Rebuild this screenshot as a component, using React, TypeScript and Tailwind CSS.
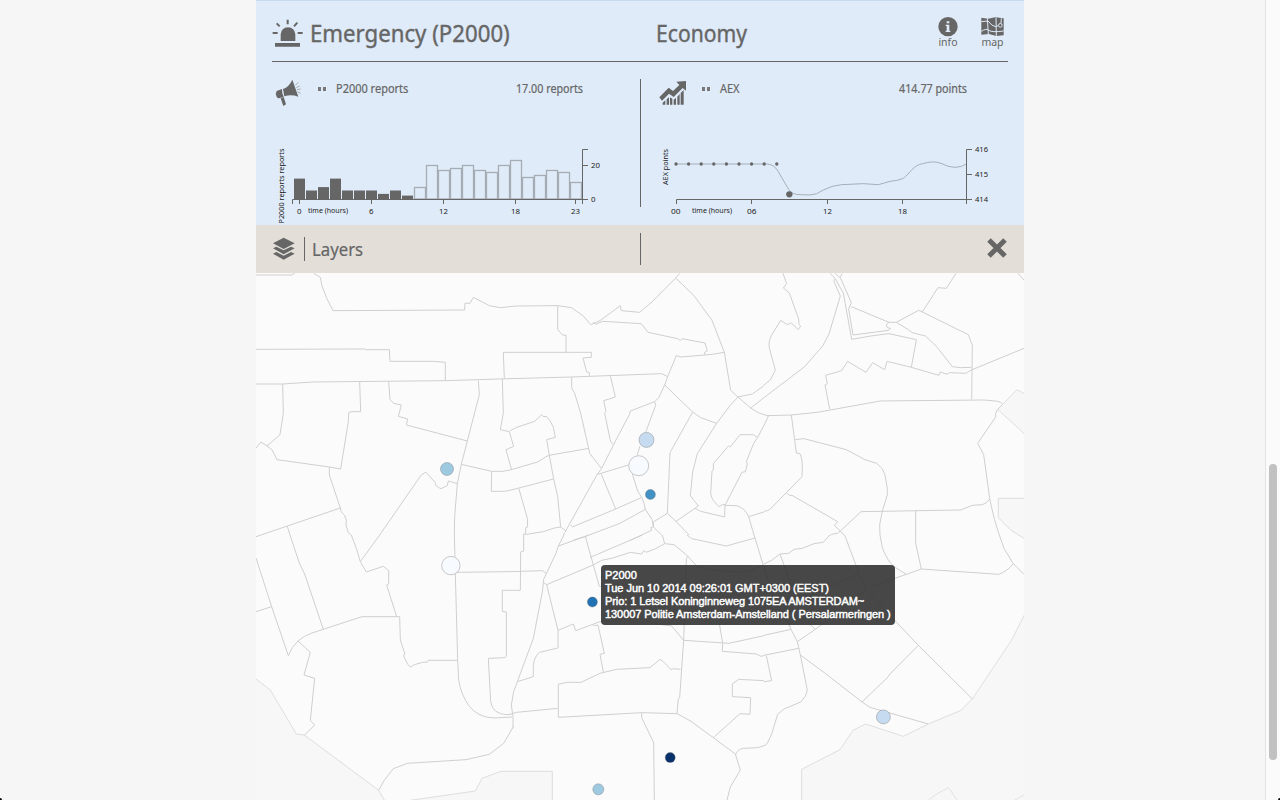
import React from 'react';

const INK = '#666';

function SirenIcon() {
  return (
    <svg className="h-7 w-[31px]" viewBox="48 57 93 84" fill={INK} stroke={INK}>
      <path stroke="none" d="M74 123V103Q76 83 96 82Q116 83 118 103V123Z M57 129H132V140H57Z" />
      <path strokeWidth="6" fill="none" d="M95 59V73 M62 70L71 79 M124 68L114 79 M50 99H65 M125 99H140" />
    </svg>
  );
}

function BullhornIcon() {
  return (
    <svg className="h-7 w-[27px]" viewBox="57 238 81 84" fill={INK}>
      <path d="M81 268Q99 262 109 240L127 291Q105 283 85 290Z M78 268L62 274Q57 282 62 291Q65 297 72 295L83 291Q77 280 78 268Z M74 296L83 292L90 314L82 319Z" />
      <path fill="none" stroke="#888" strokeWidth="2" d="M118 257L127 248 M121 264L131 259 M123 270L134 268 M124 276L134 281" />
    </svg>
  );
}

function GrowthIcon() {
  return (
    <svg className="mt-[2px] h-6 w-[27px]" viewBox="55 243 81 72" fill={INK}>
      <path d="M56 292L84 263L97 273L116 255L107 245L136 243V272L126 264L99 291L85 281L64 302Z" />
      <path d="M66 314V308L74 301V314Z M78 314V298L85 292V314Z M88 314V292L95 296V314Z M99 314V299L106 294V314Z M110 314V290L117 282V314Z M120 314V279L129 270V314Z" />
    </svg>
  );
}

function InfoIcon() {
  return (
    <svg className="size-5" viewBox="894 50 60 60">
      <circle cx="924" cy="79" r="29" fill={INK} />
      <path fill="#dfebf8" d="M920 63H928V69H920Z M917 73H928V91H931V95H917V91H920V77H917Z" />
    </svg>
  );
}

function MapIcon() {
  return (
    <svg className="h-[19px] w-[23px]" viewBox="1022 52 69 57">
      <path fill={INK} d="M1023 54L1043 57L1065 53L1090 56V107L1068 109L1046 103L1023 105Z" />
      <path fill="none" stroke="#dfebf8" strokeWidth="3" d="M1041 56L1044 104 M1067 54L1068 109 M1023 66L1043 64Q1055 80 1066 81L1074 78 M1023 95Q1038 85 1046 92T1090 94 M1083 56L1082 72" />
      <circle cx="1080" cy="77" r="5.5" fill={INK} stroke="#dfebf8" strokeWidth="3" />
    </svg>
  );
}

function LayersIcon() {
  return (
    <svg className="h-6 w-[22px]" viewBox="51 307 66 72" fill={INK}>
      <path d="M83 309L116 326L83 343L51 326Z M51 341L61 336L83 347L105 336L116 341L83 359Z M51 357L61 352L83 363L105 352L116 357L83 375Z" />
    </svg>
  );
}

const BARS = [12, 5, 7, 12, 5, 5, 5, 3, 5, 2, 7, 20, 17, 18, 20, 17, 16, 20, 23, 13, 14, 17, 16, 10];

function ChartText({ x, y, w, children, rotate = false }: { x: number; y: number; w: number; children: string; rotate?: boolean }) {
  return (
    <text
      x={x}
      y={y}
      textLength={w}
      lengthAdjust="spacingAndGlyphs"
      transform={rotate ? `rotate(-90 ${x} ${y})` : undefined}
      className="fill-[#222] font-['Noto_Sans',sans-serif] text-[7.5px]"
    >
      {children}
    </text>
  );
}

function ReportsChart() {
  return (
    <svg className="block h-[85px] w-[384px]" viewBox="256 140 384 85">
      {BARS.map((v, i) => {
        const x = 294 + i * 12;
        const h = v * 1.7;
        return i < 10 ? (
          <rect key={i} x={x} y={199 - h} width="11" height={h} fill={INK} />
        ) : (
          <rect key={i} x={x + 0.5} y={Math.round(199 - h) + 0.5} width="11" height={Math.round(h) - 0.5} fill="none" stroke="#a6acb3" strokeWidth="1.3" />
        );
      })}
      <path fill="none" stroke={INK} d="M292.5 204V199.5H582.5V204 M299.5 199V204 M371.5 199V204 M443.5 199V204 M515.5 199V204 M575.5 199V204 M588 149.5H582.5V204 M582 165.5H588 M582 199.5H588" />
      <ChartText x={297} y={214} w={4.5}>0</ChartText>
      <ChartText x={308} y={213} w={40}>time (hours)</ChartText>
      <ChartText x={369} y={214} w={4.5}>6</ChartText>
      <ChartText x={439} y={214} w={9}>12</ChartText>
      <ChartText x={511} y={214} w={9}>18</ChartText>
      <ChartText x={571} y={214} w={9}>23</ChartText>
      <ChartText x={591} y={168} w={9}>20</ChartText>
      <ChartText x={591} y={202} w={4.5}>0</ChartText>
      <ChartText x={284} y={223.5} w={75} rotate>P2000 reports reports</ChartText>
    </svg>
  );
}

function AexChart() {
  return (
    <svg className="block h-[85px] w-[384px]" viewBox="640 140 384 85">
      <g transform="translate(640 135) scale(0.33333)">
        <path fill="none" stroke="#a3b0bb" strokeWidth="3" d="M108 87H380Q402 87 415 110Q432 140 446 163Q456 179 480 179L510 180Q530 180 550 165Q580 150 605 149L670 146L715 149Q730 145 750 139Q775 137 790 130C810 115 820 90 848 86Q880 76 903 85Q925 97 945 97Q965 97 979 87" />
        {[0, 1, 2, 3, 4, 5, 6, 7, 8].map((i) => (
          <circle key={i} cx={108 + i * 37.8} cy="87" r="5" fill={INK} />
        ))}
        <circle cx="448" cy="178" r="9.5" fill={INK} />
      </g>
      <path fill="none" stroke={INK} d="M676.5 204V199.5H966.5 M751.5 199V204 M827.5 199V204 M902.5 199V204 M972 149.5H966.5V204 M966 174.5H972 M966 199.5H972" />
      <ChartText x={671} y={214} w={9.5}>00</ChartText>
      <ChartText x={692} y={213} w={40}>time (hours)</ChartText>
      <ChartText x={747} y={214} w={9.5}>06</ChartText>
      <ChartText x={823} y={214} w={9}>12</ChartText>
      <ChartText x={898} y={214} w={9}>18</ChartText>
      <ChartText x={975} y={152} w={13}>416</ChartText>
      <ChartText x={975} y={177} w={13}>415</ChartText>
      <ChartText x={975} y={202} w={13}>414</ChartText>
      <ChartText x={668} y={185} w={36} rotate>AEX points</ChartText>
    </svg>
  );
}

/* Each tile has its own origin; path units are thirds of a pixel. */
const TILES = [
  {
    at: 'translate(256 270) scale(0.33333)',
    outside: '',
    lines:
      'M0 15H107L116 10 M173 10L193 22L198 48Q210 85 231 122L626 120L627 100H642L652 82L700 107L733 113L762 110 M0 238L326 237L330 239H400L402 274H530L568 277V332 M0 342H80L170 336L568 332L762 326 M80 342L82 430L72 494L33 528L15 516L0 534 M33 528L48 539L63 569L220 591L254 597L277 455L278 428L285 425H314L311 334 M398 334L402 388L413 400L436 405L427 439L455 447L451 465L634 513 M667 332L670 374L634 513L616 583L604 641L596 740L595 795 M220 591V615L253 714L255 725L265 735L271 750L270 766L277 788L285 794 M0 800L253 714 M94 769L102 795 M371 795L495 616L509 606L538 638V645L547 652L555 656L574 647L577 633L604 641 M616 583L707 604H740L762 600 M707 604L706 664H745L762 661 M745 326L742 247H762 M739 326L742 430L733 479L760 485L773 529L750 539L755 558L767 600',
  },
  {
    at: 'translate(510 270) scale(0.33333)',
    outside: '',
    lines:
      'M0 110L20 108L143 107L185 113L220 138L242 164L270 152L331 107L334 122L389 127L426 96L497 24L509 10 M497 24L552 77L606 151L643 247L662 361L684 381L722 414L745 428L775 438 M143 107V178L157 195L168 196V247 M0 247H244V262L219 264L230 306L238 308V319 M0 326L185 321L455 311L473 320L499 257L514 261L607 253L643 247 M250 156L257 163L279 154L394 161L414 187L503 206L511 212L516 206L585 219L592 243L584 247V254 M473 320L464 345L447 382L434 395L361 423L358 434L318 510L275 595L260 616L182 756L166 785L160 795 M185 321V353L194 370L212 430L236 535L239 550L274 595 M301 317L316 381L281 392L288 424L284 430L302 516L309 522 M434 395L437 406L407 487 M390 528L382 555 M367 612L383 663L396 684L402 700L406 718L426 748L430 770L435 776L455 795 M464 345L548 426L572 443L620 460 M548 426L480 548L472 730L430 756 M684 381L660 407L620 460L562 551L548 606L541 677L565 708L555 715L498 754 M472 730L498 754L537 795 M555 715L572 724L644 741L645 706L680 707Q705 714 716 740L732 795 M716 740L762 726 M645 706L696 607L706 605L712 582L709 575L731 520L743 502Q732 491 715 494H690L661 531L656 527L610 581V600L606 603L602 672L608 689L626 710L637 704H645 M743 502L765 460L775 438 M684 381L727 372L762 347 M722 414L762 383 M0 482L20 472L74 454L95 434L100 440L109 439L120 452L130 472L136 502L110 509L118 556 M0 600L83 576L108 560L118 556L236 535 M118 556L131 627L143 680L152 771L168 783 M152 771L133 774L100 785L50 793L41 792V795 M0 661L131 627 M27 657L52 745L53 771L47 773V791 M260 614L355 585 M274 613L317 717 M182 765L187 771L317 717L396 682 M192 810L230 798L330 760L406 718 M364 810L426 780L422 773L430 770V756',
  },
  {
    at: 'translate(764 270) scale(0.33333)',
    outside: 'M716 403L759 359L785 373V495L701 418Z M785 685H703V743L740 780L785 808Z',
    lines:
      'M57 10L68 41L58 54L76 69L104 147L105 163L110 168L103 179L82 159L70 164L50 151L22 197L16 212L15 230L34 300L19 330L0 345 M0 383L122 290L176 228L195 192L229 78L209 33L214 27L238 69L263 208L320 198L375 191L457 209L442 292 M198 10L215 27 M214 10L228 23L235 10 M229 23L262 98L254 117L267 195L374 181L379 175L370 173Q363 162 375 157H397L464 121L475 126L522 53L547 55L576 10 M262 110L375 157 M397 157L430 177L445 188L484 198L517 229L565 290L590 293L622 292 M475 126L613 194L625 226L623 388 M780 235L622 300L605 310L556 308L549 313L529 306L525 316L442 292L369 274L362 299L326 278L306 307L251 274L233 302L185 316L190 341L183 345L197 417 M12 437L82 435L160 427L349 393L660 390L695 393Q714 395 716 403L701 418L695 430V441L641 520L659 554L677 685Q690 750 706 795 M82 435L97 549L108 551Q118 570 114 620L67 668L19 717Q12 723 0 724 M67 668L76 676H84L221 755L211 766L229 783L242 797 M229 783L291 725L590 720L625 706L655 704Q669 701 677 687 M229 783L220 790L203 793L197 797 M94 509L120 506L247 539L303 569L338 580Q359 595 363 615L370 656V675L355 723L347 765L348 795 M455 721V795 M762 10L780 30',
  },
  {
    at: 'translate(256 535) scale(0.33333)',
    outside: 'M-5 428L43 465L121 597L145 600L368 766L388 800H-5Z M435 800L658 768L678 730L735 709H889V800Z',
    lines:
      'M102 0L130 84L147 120L202 283 M0 69L47 215L97 362Q107 335 126 318Q145 302 165 295L318 245H431L433 315L447 358L442 361L455 388L464 396L475 389L500 382L515 381L517 376H605 M0 230L47 215 M286 0L301 40L313 80L371 0 M313 80L331 111L382 94L398 107V147L392 150L422 245 M595 0L597 66 M598 116L605 376L608 435Q615 480 640 514Q667 548 715 549L768 546 M601 112L762 110 M762 166H739V229L751 231V363L747 368L697 370L704 500Q709 537 752 539L764 538 M771 577L743 625L700 658L630 674L454 685L412 701L385 736L368 766 M126 318L163 352L144 420L176 430L163 556L176 570L145 601',
  },
  {
    at: 'translate(510 535) scale(0.33333)',
    outside: '',
    lines:
      'M41 0V48L32 51L31 166H0 M162 0L145 33L138 55L101 133L98 165L70 310L22 440L11 470L4 510L9 545V580 M145 33L226 4L235 0 M226 4L268 154H273 M240 67L262 58L397 0 M110 149L245 92L275 76L309 69L361 52L395 57L402 46L408 52L435 42L464 26L457 0 M464 26L492 29L530 60L550 82L562 95L610 105L702 113L762 90 M110 149L144 286L190 267L197 287L270 260L390 250L440 267L485 273L521 316 M144 286V339L88 352Q67 373 70 405V425L22 440 M0 110L98 107L108 115 M101 143L110 149 M247 269L253 272L264 270L283 355L270 358L280 411 M145 547V448L170 442H213L270 415L320 403L420 398L450 373L460 380L473 393L483 404L490 401L512 403 M0 538L20 532L143 520 M145 547L395 533L501 536L505 491L509 488L521 316L529 71L534 64 M395 533V548L431 623L433 795 M501 536L540 557L610 608L676 657L691 705L661 756L651 795 M610 608L690 536L720 538L722 488L667 485V447L686 433L762 437 M676 660Q682 643 700 640L743 638L762 632 M521 316L657 325L762 302 M638 325L637 349L739 357L753 364L762 362 M628 265L638 325 M531 0L545 11L649 33L735 9L732 0 M735 9L790 190L840 275',
  },
  {
    at: 'translate(764 535) scale(0.33333)',
    outside: 'M785 232L743 315L625 492L591 526L493 567L418 604L305 567L267 586L228 644L113 703V800H785Z',
    lines:
      'M0 87L23 76L48 57L74 55L90 43L115 40L150 26L178 22L197 0 M48 57L82 150L60 230L81 283L100 320L109 360L130 465Q128 485 110 501L60 522L41 538L23 597L10 625L0 633 M242 0L285 115L306 165L463 331L625 492 M348 0L355 38Q370 80 395 98L427 118 M455 0V25L472 102L704 118Q730 109 748 86L780 118 M706 0L720 40L748 86 M472 102L427 118L320 155M154 283L100 320 M0 301L81 283 M0 361L104 340 M7 362L23 437L0 440 M109 360L185 416L294 501L318 517L493 567 M463 331L375 420L373 425L294 501 M100 200L285 115 M154 283L306 165 M130 260L154 283',
  },
];

const DOTS = [
  { x: 447, y: 469, r: 6.5, fill: '#9ecae1' },
  { x: 646.5, y: 439.9, r: 7.5, fill: '#c6dbef' },
  { x: 638.7, y: 465.7, r: 10, fill: '#f7fbff' },
  { x: 650.4, y: 494.5, r: 5, fill: '#4292c6' },
  { x: 450.9, y: 565.6, r: 9.2, fill: '#f7fbff' },
  { x: 592.4, y: 602, r: 5, fill: '#2171b5' },
  { x: 670.2, y: 757.6, r: 5, fill: '#08306b' },
  { x: 598.3, y: 789.3, r: 5.5, fill: '#9ecae1' },
  { x: 883.4, y: 716.9, r: 7, fill: '#c6dbef' },
];

function DistrictMap() {
  return (
    <svg className="block h-[527px] w-[768px] bg-[#fbfbfb]" viewBox="256 273 768 527">
      {TILES.map((t) => (
        <path key={'o' + t.at} transform={t.at} d={t.outside} fill="#f7f7f7" stroke="#dedede" strokeWidth="3" />
      ))}
      <path d="M928.5 800L936 794.5L948.5 787.5L957 800 M1015 800L1024 795" fill="none" stroke="#e2e2e2" />
      {TILES.map((t) => (
        <path key={t.at} transform={t.at} d={t.lines} fill="none" stroke="#cfcfcf" strokeWidth="3" />
      ))}
      {DOTS.map((d) => (
        <circle key={d.x} cx={d.x} cy={d.y} r={d.r} fill={d.fill} stroke="#666" strokeOpacity="0.35" />
      ))}
    </svg>
  );
}

function Ticker({ icon, name, value, children }: { icon: React.ReactNode; name: string; value: string; children: React.ReactNode }) {
  return (
    <section className="flex h-[163px] w-[384px] flex-col">
      <div className="flex h-[78px] items-start pl-[19px] pt-[17px]">
        <div className="w-[43px]">{icon}</div>
        <div className="mt-[8px] flex w-[18px] gap-[2px]">
          <span className="h-1 w-[3px] bg-[#777]" />
          <span className="h-1 w-[3px] bg-[#777]" />
        </div>
        <span className="mt-px w-[130px] origin-left scale-x-[0.915] whitespace-nowrap text-xs leading-[18px] [-webkit-text-stroke:0.2px_#666]">{name}</span>
        <span className="mt-px w-[117px] origin-right scale-x-[0.895] whitespace-nowrap text-right text-xs leading-[18px] [-webkit-text-stroke:0.2px_#666]">{value}</span>
      </div>
      {children}
    </section>
  );
}

export default function App() {
  return (
    <div className="flex h-[800px] w-[1280px] overflow-hidden bg-[#f6f6f6] font-['Noto_Sans',sans-serif] text-[#666]">
      <div className="flex w-64 shrink-0 items-end">
        <span className="h-[2px] w-[2px] rounded-tr-full bg-black" />
      </div>
      <main className="relative w-[768px] shrink-0">
        <div className="h-[225px] border-t border-[#c6dbef] bg-[#dfebf8]">
          <header className="mx-4 flex h-[61px] border-b border-[#666]">
            <div className="flex w-[384px] pt-[18px]">
              <SirenIcon />
              <h1 className="ml-[7px] mt-[-2px] origin-left scale-x-[0.925] whitespace-nowrap text-2xl leading-[32px] [-webkit-text-stroke:0.4px_#666]">Emergency (P2000)</h1>
            </div>
            <h2 className="mt-[16px] w-[282px] whitespace-nowrap text-2xl leading-[32px] [-webkit-text-stroke:0.4px_#666]">
              <span className="inline-block origin-left scale-x-[0.88]">Economy</span>
            </h2>
            <div className="mt-[16px] flex w-[66px] justify-between">
              <div className="flex w-5 flex-col items-center">
                <InfoIcon />
                <span className="mt-[-1px] text-[10.5px] leading-[13px]">info</span>
              </div>
              <div className="flex w-[23px] flex-col items-center">
                <MapIcon />
                <span className="text-[10.5px] leading-[13px]">map</span>
              </div>
            </div>
          </header>
          <div className="flex">
            <Ticker icon={<BullhornIcon />} name="P2000 reports" value="17.00 reports">
              <ReportsChart />
            </Ticker>
            <div className="mt-[17px] h-32 w-px bg-[#666]" />
            <div className="-ml-px">
              <Ticker icon={<GrowthIcon />} name="AEX" value="414.77 points">
                <AexChart />
              </Ticker>
            </div>
          </div>
        </div>
        <div className="flex h-12 items-center bg-[#e3ded8] pl-[17px]">
          <LayersIcon />
          <span className="ml-[9px] h-6 w-px bg-[#666]" />
          <h3 className="ml-[7px] w-[328px] whitespace-nowrap text-lg [-webkit-text-stroke:0.2px_#666]">
            <span className="inline-block origin-left scale-x-[0.93]">Layers</span>
          </h3>
          <span className="h-8 w-px bg-[#666]" />
          <svg className="ml-[346px] mt-[-2px] size-5" viewBox="0 0 20 20">
            <path d="M2 2L18 18M18 2L2 18" stroke={INK} strokeWidth="5" />
          </svg>
        </div>
        <DistrictMap />
        <div className="absolute left-[345px] top-[565px] h-[60px] w-[294px] whitespace-nowrap rounded bg-[#333]/90 py-1 pl-1 font-['Liberation_Sans',sans-serif] text-[11px] leading-[13px] text-white [-webkit-text-stroke:0.45px_white]">
          <div>P2000</div>
          <div className="tracking-[-0.04px]">Tue Jun 10 2014 09:26:01 GMT+0300 (EEST)</div>
          <div className="tracking-[-0.09px]">Prio: 1 Letsel Koninginneweg 1075EA AMSTERDAM~</div>
          <div className="tracking-[-0.075px]">130007 Politie Amsterdam-Amstelland ( Persalarmeringen )</div>
        </div>
      </main>
      <div className="w-[241px] shrink-0" />
      <aside className="flex w-[15px] flex-col items-end border-l border-[#e4e4e4] bg-[#fbfbfb]">
        <div className="mr-[3px] mt-[464px] h-[296px] w-2 rounded-full bg-[#c1c1c1]" />
        <span className="mt-auto h-[2px] w-[2px] rounded-tl-full bg-black" />
      </aside>
    </div>
  );
}
